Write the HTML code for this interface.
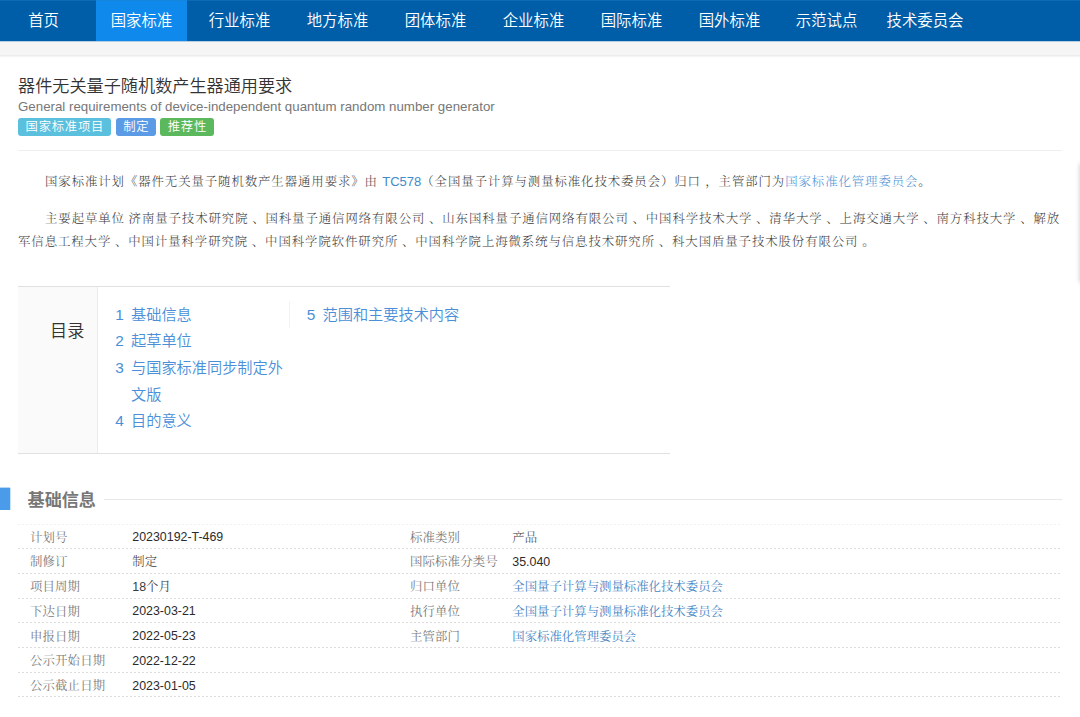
<!DOCTYPE html>
<html lang="zh-CN">
<head>
<meta charset="utf-8">
<title>器件无关量子随机数产生器通用要求</title>
<style>
*{box-sizing:border-box;margin:0;padding:0}
html,body{width:1080px;height:717px;overflow:hidden;background:#fff}
body{position:relative;font-family:"Liberation Sans","Noto Sans CJK SC",sans-serif;color:#333;font-size:13.3px}
a{text-decoration:none;color:#4a90d9}
.sans{font-family:"Liberation Sans","Noto Sans CJK SC",sans-serif}
.serif{font-family:"Liberation Sans","Noto Serif CJK SC",serif}

/* nav */
#nav{position:absolute;z-index:2;left:0;top:0;width:1080px;height:41px;background:#005ea8;border-top:1px solid #0b69b6}
#nav:after{content:"";position:absolute;left:0;top:40px;width:1080px;height:1px;background:#b4cde1}
#nav a{position:absolute;top:0;height:40px;line-height:40px;color:#fff;font-weight:350;font-size:15.4px;white-space:nowrap;text-align:center}
#nav a.on{background:#0f89ec;border-top:0;box-shadow:0 -1px 0 #1685dd}
#band{position:absolute;left:0;top:41px;width:1080px;height:15px;background:#f5f5f5;border-bottom:1px solid #ececec;box-shadow:0 1px 1px rgba(0,0,0,.04)}

/* header */
#title{position:absolute;left:18px;top:73.9px;font-size:17.15px;line-height:24px;color:#333;white-space:nowrap;font-weight:350}
#sub{position:absolute;left:18px;top:97.5px;font-size:13.3px;line-height:18px;color:#777;white-space:nowrap}
.tags{position:absolute;left:18px;top:118px;height:17.5px;white-space:nowrap;font-size:0}
.tag{position:absolute;top:0;height:17.5px;line-height:18.6px;border-radius:3px;color:#fff;font-size:12.35px;letter-spacing:.75px;text-indent:.75px;text-align:center;font-weight:350;overflow:hidden}
.t1{background:#5bc0de}.t2{background:#5b9be6}.t3{background:#5cb85c}
#hr1{position:absolute;left:18px;top:150px;width:1044px;height:1px;background:#efefef}

/* paragraphs */
.p{position:absolute;left:18px;width:1046px;white-space:nowrap;font-size:12.4px;letter-spacing:.925px;word-spacing:-.65px;line-height:22.8px;color:#3c3c3c;text-indent:27px;font-weight:300}
.p a{color:#4d92d6}

/* toc */
#toc{position:absolute;left:18px;top:286px;width:652px;height:168px;border-top:1px solid #e1e1e1;border-bottom:1px solid #e1e1e1}
#tocl{position:absolute;left:0;top:0;width:80px;height:166px;background:#fafafa;border-right:1px solid #ebebeb}
#tocl span{position:absolute;left:32px;top:31.6px;font-weight:350;font-size:17.15px;line-height:24px;color:#333;white-space:nowrap}
.ti{position:absolute;font-size:15.2px;line-height:26.6px;color:#4a8fd8;white-space:nowrap;font-weight:350;margin-top:.8px}
.ti i{font-style:normal;position:absolute;left:-15.8px;top:-.3px;font-size:15.4px}
#tsep{position:absolute;left:271px;top:14px;width:1px;height:27px;background:#f3f3f3}

/* section head */
#blk{position:absolute;left:0;top:488px;width:10px;height:22px;background:#4b9beb;box-shadow:1px 0 0 rgba(75,155,235,.3),0 -1px 0 rgba(75,155,235,.4)}
#h2{position:absolute;left:27.6px;top:488.7px;font-size:17.1px;line-height:24px;font-weight:700;color:#777;white-space:nowrap}
#hl{position:absolute;left:104px;top:499px;width:958px;height:1px;background:#e8e8e8}

/* table */
.row{position:absolute;left:18px;width:1044px;height:25px;background:repeating-linear-gradient(90deg,#dcdcdc 0,#dcdcdc 2px,transparent 2px,transparent 4px) 0 0/100% 1px no-repeat}
.row.r0{background-image:repeating-linear-gradient(90deg,#f2f2f2 0,#f2f2f2 2px,transparent 2px,transparent 4px)}
.row span{position:absolute;top:1.9px;line-height:24.7px;font-size:12.4px;white-space:nowrap}
.row span.serif{top:2.3px}
.row .l{color:#7a7a7a;font-weight:400;letter-spacing:.15px}
.row .v{color:#2b2b2b}
.row .v.serif{color:#3a3a3a}
.row .l1{left:12px}.row .v1{left:114.3px}.row .l2{left:392px}.row .v2{left:494.3px}
.row a{color:#4585c4;font-weight:400}
#edge{position:absolute;left:1080px;top:163px;width:10px;height:120px;background:#fff;border-radius:2px;box-shadow:0 0 5px rgba(0,0,0,.22)}
</style>
</head>
<body>
<div id="nav">
<a style="left:13.6px;width:60px">首页</a>
<a class="on" style="left:96px;width:91px">国家标准</a>
<a style="left:194px;width:91px">行业标准</a>
<a style="left:292px;width:91px">地方标准</a>
<a style="left:390px;width:91px">团体标准</a>
<a style="left:488px;width:91px">企业标准</a>
<a style="left:586px;width:91px">国际标准</a>
<a style="left:684px;width:91px">国外标准</a>
<a style="left:781px;width:91px">示范试点</a>
<a style="left:872px;width:106px">技术委员会</a>
</div>
<div id="band"></div>

<h1 id="title">器件无关量子随机数产生器通用要求</h1>
<div id="sub">General requirements of device-independent quantum random number generator</div>
<div class="tags"><span class="tag t1" style="left:0;width:93px">国家标准项目</span><span class="tag t2" style="left:98px;width:40px">制定</span><span class="tag t3" style="left:142px;width:54px">推荐性</span></div>
<div id="hr1"></div>

<p class="p serif" style="top:170.8px;word-spacing:0">国家标准计划《器件无关量子随机数产生器通用要求》由 <a class="sans" style="font-weight:400;font-size:13px;letter-spacing:0;color:#428bca">TC578</a>（全国量子计算与测量标准化技术委员会）归口 ，主管部门为<a>国家标准化管理委员会</a>。</p>
<p class="p serif" style="top:208.3px">主要起草单位 济南量子技术研究院 、国科量子通信网络有限公司 、山东国科量子通信网络有限公司 、中国科学技术大学 、清华大学 、上海交通大学 、南方科技大学 、解放<br>军信息工程大学 、中国计量科学研究院 、中国科学院软件研究所 、中国科学院上海微系统与信息技术研究所 、科大国盾量子技术股份有限公司 。</p>

<div id="toc">
<div id="tocl"><span>目录</span></div>
<div id="tsep"></div>
<a class="ti" style="left:113px;top:14px"><i>1</i>基础信息</a>
<a class="ti" style="left:113px;top:40.6px"><i>2</i>起草单位</a>
<a class="ti" style="left:113px;top:67.2px"><i>3</i>与国家标准同步制定外<br>文版</a>
<a class="ti" style="left:113px;top:120.4px"><i>4</i>目的意义</a>
<a class="ti" style="left:304.5px;top:14px"><i>5</i>范围和主要技术内容</a>
</div>

<div id="blk"></div>
<h2 id="h2">基础信息</h2>
<div id="hl"></div>

<div class="row r0" style="top:523.5px"><span class="l l1 serif">计划号</span><span class="v v1">20230192-T-469</span><span class="l l2 serif">标准类别</span><span class="v v2 serif" style="font-weight:300">产品</span></div>
<div class="row" style="top:548.2px"><span class="l l1 serif">制修订</span><span class="v v1 serif" style="font-weight:300">制定</span><span class="l l2 serif">国际标准分类号</span><span class="v v2">35.040</span></div>
<div class="row" style="top:572.9px"><span class="l l1 serif">项目周期</span><span class="v v1 serif">18个月</span><span class="l l2 serif">归口单位</span><span class="v v2 serif"><a>全国量子计算与测量标准化技术委员会</a></span></div>
<div class="row" style="top:597.6px"><span class="l l1 serif">下达日期</span><span class="v v1">2023-03-21</span><span class="l l2 serif">执行单位</span><span class="v v2 serif"><a>全国量子计算与测量标准化技术委员会</a></span></div>
<div class="row" style="top:622.3px"><span class="l l1 serif">申报日期</span><span class="v v1">2022-05-23</span><span class="l l2 serif">主管部门</span><span class="v v2 serif"><a>国家标准化管理委员会</a></span></div>
<div class="row" style="top:647.0px"><span class="l l1 serif">公示开始日期</span><span class="v v1">2022-12-22</span></div>
<div class="row" style="top:671.7px"><span class="l l1 serif">公示截止日期</span><span class="v v1">2023-01-05</span></div>
<div class="row" style="top:696.4px;height:1px"></div>
<div id="edge"></div>
</body>
</html>
